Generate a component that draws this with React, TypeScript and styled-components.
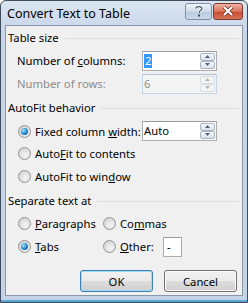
import React from "react";
import styled, { createGlobalStyle, css } from "styled-components";

const Global = createGlobalStyle`
  html, body { margin: 0; padding: 0; background: #fff; }
  body { width: 248px; height: 303px; overflow: hidden; }
`;

const FONT = `"Noto Sans", "Open Sans", "DejaVu Sans", sans-serif`;

const Window = styled.div`
  box-sizing: border-box;
  width: 248px;
  height: 303px;
  border: 1px solid #3e4b5c;
  border-radius: 6px 6px 0 0;
  background: linear-gradient(#dbe5f1, #c8d6e9 30px, #c4d3e6);
  display: flex;
  flex-direction: column;
  font-family: ${FONT};
  font-size: 11.25px;
  color: #000;
  overflow: hidden;
`;

const TitleBar = styled.div`
  height: 24px;
  display: flex;
  align-items: center;
  gap: 1px;
  padding: 0 4px 0 6px;
`;

const Title = styled.div`
  flex: 1;
  font-size: 12.5px;
  color: #000;
  margin-top: 1px;
`;

const CaptionButton = styled.div<{ $close?: boolean }>`
  box-sizing: border-box;
  width: ${(p) => (p.$close ? 30 : 27)}px;
  height: 17px;
  margin-top: -4px;
  border: 1px solid ${(p) => (p.$close ? "#7a3a2e" : "#7f8ea2")};
  border-radius: 3px;
  display: flex;
  align-items: center;
  justify-content: center;
  ${(p) =>
    p.$close
      ? css`background: linear-gradient(#eeb3a4, #d97257 50%, #c64b2f 51%, #d6735a);`
      : css`background: linear-gradient(#eef3f8, #cfdbea 50%, #b8c9dd 51%, #cbd9ea);`}
`;

const Frame = styled.div`
  flex: 1;
  display: flex;
  padding: 0 4px 4px 4px;
  border-bottom: 2px solid #5aa6d6;
`;

const Client = styled.div`
  flex: 1;
  box-sizing: border-box;
  background: #f0f0f0;
  border: 1px solid #8a98a8;
  padding: 0 2px 0 2px;
  display: flex;
  flex-direction: column;
`;

const GroupHeader = styled.div<{ $mt?: number }>`
  display: flex;
  align-items: center;
  height: 23px;
  margin-top: ${(p) => p.$mt ?? 0}px;
  &::after {
    content: "";
    flex: 1;
    height: 1px;
    background: #d5dfe5;
    margin: 1px 1px 0 6px;
  }
`;

const Row = styled.div`
  display: flex;
  align-items: center;
  height: 23px;
  padding-left: 9px;
`;

const Label = styled.span<{ $w?: number; $disabled?: boolean }>`
  width: ${(p) => (p.$w ? `${p.$w}px` : "auto")};
  color: ${(p) => (p.$disabled ? "#8d8d8d" : "#000")};
  white-space: nowrap;
`;

const U = styled.span`
  text-decoration: underline;
  text-underline-offset: 1px;
`;

const SpinBox = styled.div<{ $disabled?: boolean }>`
  box-sizing: border-box;
  width: 75px;
  height: 20px;
  border: 1px solid ${(p) => (p.$disabled ? "#c5d5e8" : "#abadb3")};
  border-top-color: ${(p) => (p.$disabled ? "#aec1d9" : "#9a9ca3")};
  background: ${(p) => (p.$disabled ? "#f4f4f4" : "#fff")};
  display: flex;
  align-items: stretch;
`;

const SpinText = styled.div<{ $disabled?: boolean }>`
  flex: 1;
  display: flex;
  align-items: center;
  padding-left: 1px;
  color: ${(p) => (p.$disabled ? "#8d8d8d" : "#000")};
`;

const Selected = styled.span`
  background: #3399ff;
  color: #fff;
  padding: 0 1px;
  line-height: 14px;
`;

const Spinner = styled.div`
  width: 15px;
  display: flex;
  flex-direction: column;
  padding: 1px 1px 1px 0;
`;

const SpinButton = styled.div<{ $disabled?: boolean }>`
  flex: 1;
  box-sizing: border-box;
  border: 1px solid ${(p) => (p.$disabled ? "#d8dde3" : "#a9b4c0")};
  border-radius: 2px;
  background: ${(p) =>
    p.$disabled ? "#f4f4f4" : "linear-gradient(#f6f8fa, #dde3ea)"};
  display: flex;
  align-items: center;
  justify-content: center;
`;

const Arrow = ({ up, disabled }: { up?: boolean; disabled?: boolean }) => (
  <svg width="5" height="3" viewBox="0 0 5 3">
    <path
      d={up ? "M0 3 L2.5 0 L5 3 Z" : "M0 0 L2.5 3 L5 0 Z"}
      fill={disabled ? "#b4b4b4" : "#4d6185"}
    />
  </svg>
);

const Spin = ({
  value,
  disabled,
  selected,
}: {
  value: string;
  disabled?: boolean;
  selected?: boolean;
}) => (
  <SpinBox $disabled={disabled}>
    <SpinText $disabled={disabled}>
      {selected ? <Selected>{value}</Selected> : value}
    </SpinText>
    <Spinner>
      <SpinButton $disabled={disabled}>
        <Arrow up disabled={disabled} />
      </SpinButton>
      <SpinButton $disabled={disabled}>
        <Arrow disabled={disabled} />
      </SpinButton>
    </Spinner>
  </SpinBox>
);

const RadioWrap = styled.span<{ $w?: number }>`
  display: inline-flex;
  align-items: center;
  width: ${(p) => (p.$w ? `${p.$w}px` : "auto")};
  white-space: nowrap;
`;

const RadioCircle = styled.span<{ $checked?: boolean }>`
  box-sizing: border-box;
  width: 13px;
  height: 13px;
  border-radius: 50%;
  border: 1px solid #939393;
  background: radial-gradient(circle at 60% 65%, #f6f6f6, #d8d8d8 70%, #c2c2c2);
  display: inline-flex;
  align-items: center;
  justify-content: center;
  margin-left: 1px;
  margin-right: 4px;
  &::after {
    content: "";
    display: ${(p) => (p.$checked ? "block" : "none")};
    width: 7px;
    height: 7px;
    border-radius: 50%;
    background: radial-gradient(circle at 35% 35%, #a6e4ff, #1d82c9 55%, #0b4f8a);
  }
`;

const Radio = ({
  checked,
  children,
  w,
}: {
  checked?: boolean;
  children: React.ReactNode;
  w?: number;
}) => (
  <RadioWrap $w={w}>
    <RadioCircle $checked={checked} />
    <span>{children}</span>
  </RadioWrap>
);

const SmallBox = styled.div`
  box-sizing: border-box;
  width: 19px;
  height: 20px;
  border: 1px solid #abadb3;
  border-top-color: #9a9ca3;
  background: #fff;
  display: flex;
  align-items: center;
  padding-left: 3px;
`;

const Buttons = styled.div`
  display: flex;
  justify-content: flex-end;
  gap: 11px;
  margin-top: 12px;
  padding-right: 3px;
`;

const Button = styled.div<{ $default?: boolean }>`
  box-sizing: border-box;
  width: 73px;
  height: 22px;
  border: 1px solid ${(p) => (p.$default ? "#3c7fb1" : "#707070")};
  border-radius: 3px;
  background: linear-gradient(#f2f2f2, #ebebeb 50%, #dddddd 51%, #cfcfcf);
  box-shadow: inset 0 0 0 1px ${(p) => (p.$default ? "#9ddcf7" : "#fbfbfb")};
  display: flex;
  align-items: center;
  justify-content: center;
`;

export default function App() {
  return (
    <>
      <Global />
      <Window>
        <TitleBar>
          <Title>Convert Text to Table</Title>
          <CaptionButton>
            <svg width="10" height="12" viewBox="0 0 10 12">
              <path
                d="M2 3.5 C2 1.2 8 1 8 3.6 C8 5.6 5 5.6 5 8"
                stroke="#fff"
                strokeWidth="2.8"
                fill="none"
              />
              <path
                d="M2 3.5 C2 1.2 8 1 8 3.6 C8 5.6 5 5.6 5 8"
                stroke="#3d4d63"
                strokeWidth="1.2"
                fill="none"
              />
              <rect x="4" y="9.5" width="2" height="2" fill="#3d4d63" />
            </svg>
          </CaptionButton>
          <CaptionButton $close>
            <svg width="12" height="10" viewBox="0 0 12 10">
              <path d="M2 1 L10 9 M10 1 L2 9" stroke="#6b2a1e" strokeWidth="3.6" />
              <path d="M2 1 L10 9 M10 1 L2 9" stroke="#fff" strokeWidth="2.2" />
            </svg>
          </CaptionButton>
        </TitleBar>
        <Frame>
          <Client>
            <GroupHeader>Table size</GroupHeader>
            <Row>
              <Label $w={125}>
                Number of <U>c</U>olumns:
              </Label>
              <Spin value="2" selected />
            </Row>
            <Row>
              <Label $w={125} $disabled>
                Number of rows:
              </Label>
              <Spin value="6" disabled />
            </Row>
            <GroupHeader $mt={1}>AutoFit behavior</GroupHeader>
            <Row>
              <Label $w={125}>
                <Radio checked>
                  Fixed column <U>w</U>idth:
                </Radio>
              </Label>
              <Spin value="Auto" />
            </Row>
            <Row>
              <Radio>
                Auto<U>F</U>it to contents
              </Radio>
            </Row>
            <Row>
              <Radio>
                AutoFit to win<U>d</U>ow
              </Radio>
            </Row>
            <GroupHeader $mt={1}>Separate text at</GroupHeader>
            <Row>
              <Radio w={85}>
                <U>P</U>aragraphs
              </Radio>
              <Radio>
                Co<U>m</U>mas
              </Radio>
            </Row>
            <Row>
              <Radio checked w={85}>
                <U>T</U>abs
              </Radio>
              <Radio w={61}>
                <U>O</U>ther:
              </Radio>
              <SmallBox>-</SmallBox>
            </Row>
            <Buttons>
              <Button $default>OK</Button>
              <Button>Cancel</Button>
            </Buttons>
          </Client>
        </Frame>
      </Window>
    </>
  );
}
